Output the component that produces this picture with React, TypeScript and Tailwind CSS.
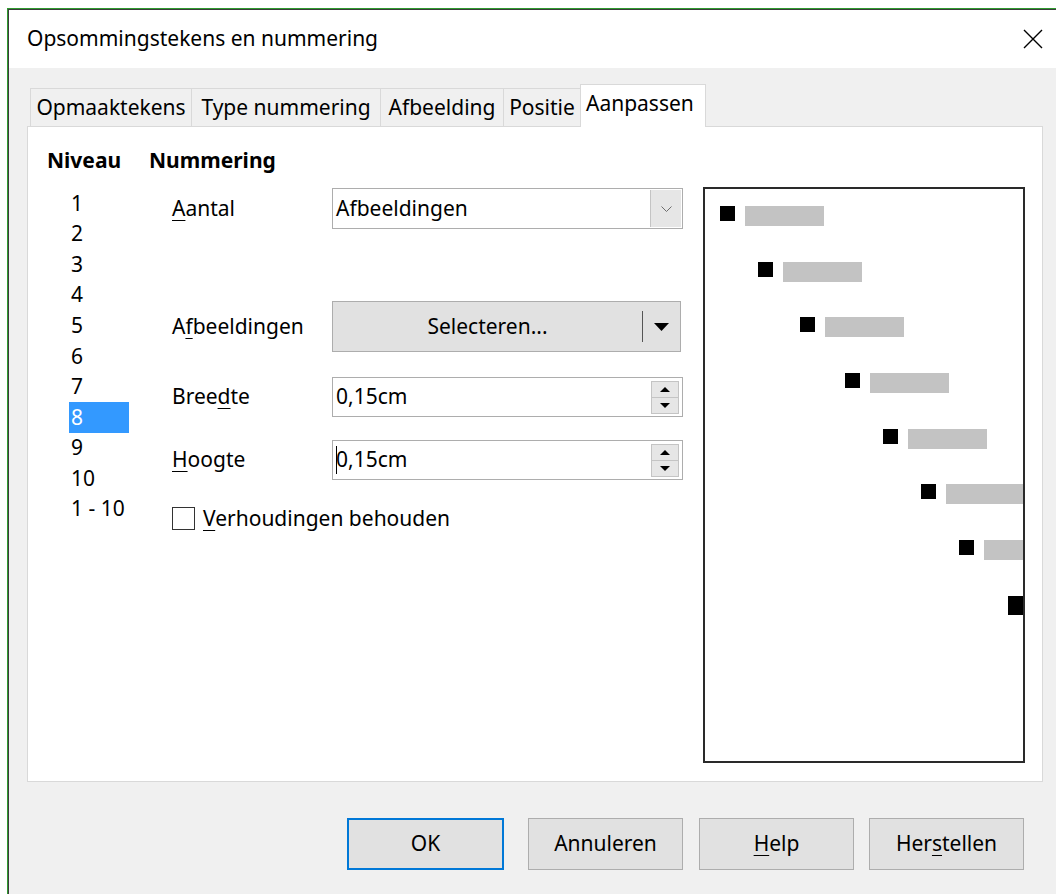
import React from 'react';

// Underlines one character of a label (keyboard mnemonic)
function Mn({ text, at }: { text: string; at: number }) {
  return (
    <span>
      {text.slice(0, at)}
      <span className="underline decoration-1 underline-offset-[4px]">{text[at]}</span>
      {text.slice(at + 1)}
    </span>
  );
}

const tabs = [
  { label: 'Opmaaktekens', width: 'w-[161px]' },
  { label: 'Type nummering', width: 'w-[189px]' },
  { label: 'Afbeelding', width: 'w-[123px]' },
  { label: 'Positie', width: 'w-[77px]' },
];

const levels = ['1', '2', '3', '4', '5', '6', '7', '8', '9', '10', '1 - 10'];

// preview lines: indent of the bullet, bullet size
const previewRows = [
  { indent: 'ml-[15px]', size: 'w-[15px] h-[15px]' },
  { indent: 'ml-[53px]', size: 'w-[15px] h-[15px]' },
  { indent: 'ml-[95px]', size: 'w-[15px] h-[15px]' },
  { indent: 'ml-[140px]', size: 'w-[15px] h-[15px]' },
  { indent: 'ml-[178px]', size: 'w-[15px] h-[15px]' },
  { indent: 'ml-[216px]', size: 'w-[15px] h-[15px]' },
  { indent: 'ml-[254px]', size: 'w-[15px] h-[15px]' },
  { indent: 'ml-[303px]', size: 'w-[19px] h-[19px]' },
];

function SpinField({ value, caret }: { value: string; caret?: boolean }) {
  return (
    <div className="flex h-[40px] w-[351px] items-center border border-[#adadad] bg-white pl-[3px] pr-[3px]">
      <div className="flex flex-1 items-center">
        {caret && <span className="-mr-px h-[28px] w-px shrink-0 bg-black" />}
        <span>{value}</span>
      </div>
      <div className="flex h-[33px] w-[28px] flex-col border border-[#c4c4c4] bg-[#e6e6e6]">
        <div className="flex flex-1 items-center justify-center border-b border-[#c4c4c4]">
          <svg width="10" height="5" viewBox="0 0 10 5">
            <path d="M0 5 L5 0 L10 5 Z" fill="#000" />
          </svg>
        </div>
        <div className="flex flex-1 items-center justify-center">
          <svg width="10" height="5" viewBox="0 0 10 5">
            <path d="M0 0 L10 0 L5 5 Z" fill="#000" />
          </svg>
        </div>
      </div>
    </div>
  );
}

export default function App() {
  return (
    <div className="h-[894px] w-[1056px] overflow-hidden bg-white pl-[7px] pt-[8px] font-['Noto_Sans',sans-serif] text-[21px] text-black">
      <div className="h-full border-l border-t border-[#2f9a2f]">
        <div className="flex h-full flex-col border-l border-t border-[#3c3c3c]">
          {/* Title bar */}
          <div className="flex h-[58px] shrink-0 items-center justify-between bg-white pl-[18px] pr-[13px]">
            <span>Opsommingstekens en nummering</span>
            <svg width="20" height="20" viewBox="0 0 20 20">
              <path d="M1 1 L19 19 M19 1 L1 19" stroke="#000" strokeWidth="1.4" />
            </svg>
          </div>

          {/* Dialog body */}
          <div className="flex flex-1 flex-col bg-[#f0f0f0] pl-[18px]">
            {/* Tabs */}
            <div className="mt-[16px] flex h-[42px] items-end pl-[3px]">
              {tabs.map((t) => (
                <div
                  key={t.label}
                  className={`flex h-[38px] items-center justify-center border-l border-t border-[#d9d9d9] bg-[#f0f0f0] ${t.width}`}
                >
                  {t.label}
                </div>
              ))}
              <div className="relative z-10 -mb-px flex h-[43px] w-[126px] items-center border-l border-r border-t border-[#d9d9d9] bg-white pb-[4px] pl-[5px]">
                Aanpassen
              </div>
            </div>

            {/* Tab page */}
            <div className="flex h-[656px] w-[1016px] border border-[#d9d9d9] bg-white pl-[19px] pt-[19px]">
              {/* Level list */}
              <div className="w-[102px] shrink-0">
                <div className="font-bold leading-[28px]">Niveau</div>
                <div className="mt-[14px] flex flex-col">
                  {levels.map((l) => (
                    <div key={l} className="flex h-[30.6px] items-center pl-[22px]">
                      <span
                        className={`flex h-full w-[60px] items-center pl-[2px] ${
                          l === '8' ? 'bg-[#3399ff] text-white' : ''
                        }`}
                      >
                        {l}
                      </span>
                    </div>
                  ))}
                </div>
              </div>

              {/* Numbering settings */}
              <div className="w-[554px] shrink-0">
                <div className="font-bold leading-[28px]">Nummering</div>
                <div className="flex flex-col pl-[23px]">
                  <div className="mt-[14px] flex h-[41px] items-center">
                    <span className="w-[160px]">
                      <Mn text="Aantal" at={0} />
                    </span>
                    <div className="flex h-[41px] w-[351px] items-stretch border border-[#adadad] bg-white">
                      <div className="flex flex-1 items-center pl-[3px]">Afbeeldingen</div>
                      <div className="my-px mr-px flex w-[31px] items-center justify-center border-l border-[#c4c4c4] bg-[#e6e6e6]">
                        <svg width="11" height="6" viewBox="0 0 11 6">
                          <path d="M0.5 0.5 L5.5 5.5 L10.5 0.5" fill="none" stroke="#6d6d6d" strokeWidth="1" />
                        </svg>
                      </div>
                    </div>
                  </div>

                  <div className="mt-[72px] flex h-[51px] items-center">
                    <span className="w-[160px]">
                      <Mn text="Afbeeldingen" at={1} />
                    </span>
                    <div className="flex h-[51px] w-[349px] items-center border border-[#adadad] bg-[#e1e1e1]">
                      <div className="flex flex-1 justify-center">Selecteren...</div>
                      <div className="h-[31px] w-px bg-[#555]" />
                      <div className="flex w-[37px] justify-center">
                        <svg width="15" height="8" viewBox="0 0 15 8">
                          <path d="M0 0 L15 0 L7.5 8 Z" fill="#000" />
                        </svg>
                      </div>
                    </div>
                  </div>

                  <div className="mt-[25px] flex h-[40px] items-center">
                    <span className="w-[160px]">
                      <Mn text="Breedte" at={4} />
                    </span>
                    <SpinField value="0,15cm" />
                  </div>

                  <div className="mt-[23px] flex h-[40px] items-center">
                    <span className="w-[160px]">
                      <Mn text="Hoogte" at={0} />
                    </span>
                    <SpinField value="0,15cm" caret />
                  </div>

                  <div className="mt-[27px] flex h-[23px] items-center">
                    <div className="h-[23px] w-[23px] border border-[#333] bg-white" />
                    <span className="ml-[8px]">
                      <Mn text="Verhoudingen behouden" at={0} />
                    </span>
                  </div>
                </div>
              </div>

              {/* Preview */}
              <div className="mt-[41px] h-[576px] w-[322px] shrink-0 overflow-hidden border-2 border-[#2a2a2a] bg-white pt-[17px]">
                {previewRows.map((r, i) => (
                  <div key={i} className={`flex h-[55.7px] items-start gap-[10px] ${r.indent}`}>
                    <div className={`shrink-0 bg-black ${r.size}`} />
                    <div className="h-[20px] w-[79px] shrink-0 bg-[#c3c3c3]" />
                  </div>
                ))}
              </div>
            </div>

            {/* Buttons */}
            <div className="mt-[36px] flex h-[52px] pl-[320px]">
              <button className="w-[157px] border-2 border-[#0078d7] bg-[#e1e1e1]">OK</button>
              <button className="ml-[24px] w-[155px] border border-[#adadad] bg-[#e1e1e1]">Annuleren</button>
              <button className="ml-[16px] w-[155px] border border-[#adadad] bg-[#e1e1e1]">
                <Mn text="Help" at={0} />
              </button>
              <button className="ml-[15px] w-[155px] border border-[#adadad] bg-[#e1e1e1]">
                <Mn text="Herstellen" at={3} />
              </button>
            </div>
          </div>
        </div>
      </div>
    </div>
  );
}
